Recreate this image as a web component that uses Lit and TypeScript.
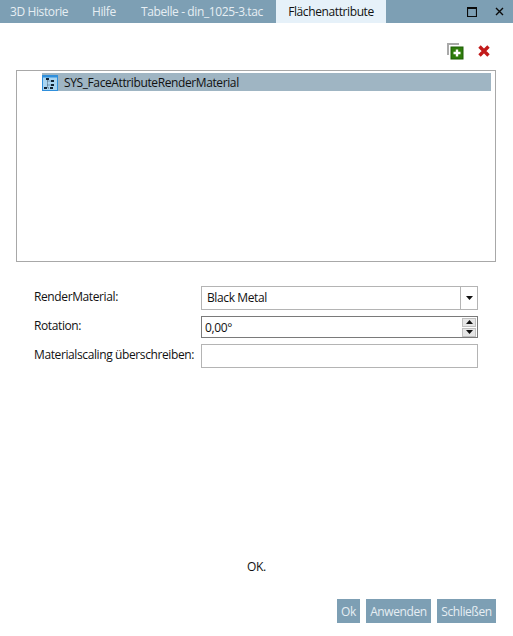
import { LitElement, html, css } from "lit";
import { customElement } from "lit/decorators.js";

@customElement("app-root")
export class AppRoot extends LitElement {
  static styles = css`
    :host { display: block; width: 513px; height: 636px; background: #fff; font-family: "Open Sans", "Noto Sans", sans-serif; font-size: 12px; letter-spacing: -0.39px; color: #111; overflow: hidden; }
    .root { display: flex; flex-direction: column; height: 636px; }
    .tabbar { display: flex; align-items: stretch; height: 23px; background: #7d9fb4; color: #e6eef3; flex: none; }
    .tab { display: flex; align-items: center; white-space: nowrap; }
    .t1 { margin-left: 10px; width: 82px; }
    .t2 { width: 49px; }
    .t3 { width: 135px; }
    .active { width: 110px; background: #e6f1f9; color: #111; justify-content: center; }
    .winbtns { margin-left: auto; display: flex; align-items: center; gap: 18px; padding-right: 9px; }
    .winbtns svg { display: block; }
    .toolbar { display: flex; justify-content: flex-end; gap: 13px; padding: 20px 22px 0 0; height: 27px; box-sizing: content-box; align-items: flex-start; flex: none; }
    .toolbar svg { display: block; }
    .list { margin: 0 17px 0 16px; height: 192px; box-sizing: border-box; border: 1px solid #a8a8a8; padding: 2px 4px 0 25px; flex: none; }
    .row { display: flex; align-items: center; gap: 6px; height: 18px; background: #9fb5c3; }
    .row svg { display: block; margin-top: 1px; }
    .form { display: grid; grid-template-columns: 167px 277px; padding: 24px 0 0 34px; row-gap: 6px; flex: none; align-items: center; }
    .form label { white-space: nowrap; margin-top: -4px; }
    .field { height: 24px; box-sizing: border-box; border: 1px solid #b4b4b4; display: flex; align-items: center; background: #fff; }
    .combo { padding-left: 5px; justify-content: space-between; }
    .combo span { margin-top: -2px; }
    .dd { width: 16px; height: 22px; border-left: 1px solid #b4b4b4; display: flex; align-items: center; justify-content: center; }
    .spin { border-color: #7a7a7a; height: 22px; padding-left: 3px; justify-content: space-between; }
    .spinbtns { display: flex; flex-direction: column; gap: 1px; margin-right: 1px; }
    .sb { width: 12px; height: 7px; background: #e6e6e6; border: 1px solid #c0c0c0; display: flex; align-items: center; justify-content: center; }
    .spacer { flex: 1; display: flex; flex-direction: column; align-items: flex-start; justify-content: flex-end; padding-left: 247px; padding-bottom: 24px; }
    .footer { display: flex; justify-content: flex-end; gap: 6px; padding: 0 17px 13px 0; flex: none; }
    .btn { height: 24px; background: #7d9fb4; color: #e6eef3; display: flex; align-items: center; justify-content: center; }
    .b1 { width: 23px; } .b2 { width: 65px; } .b3 { width: 59px; }
  `;

  render() {
    return html`<div class="root">
      <div class="tabbar">
        <div class="tab t1">3D Historie</div>
        <div class="tab t2">Hilfe</div>
        <div class="tab t3">Tabelle - din_1025-3.tac</div>
        <div class="tab active">Flächenattribute</div>
        <div class="winbtns">
          <svg width="10" height="10" viewBox="0 0 10 10"><path d="M.5.5h9v9h-9z M0 1.5h10" fill="none" stroke="#0a0a0a" stroke-width="1.2"/></svg>
          <svg width="9" height="9" viewBox="0 0 9 9"><path d="M1 1l7 7M8 1L1 8" stroke="#0a0a0a" stroke-width="1.4"/></svg>
        </div>
      </div>
      <div class="toolbar">
        <svg width="17" height="17" viewBox="0 0 17 17">
          <path d="M1 12V1h11" fill="none" stroke="#a9a9a9" stroke-width="2"/>
          <rect x="4" y="4" width="12" height="12" fill="#2f7d0c" stroke="#1f5f06"/>
          <path d="M10 6.500v7M6.500 10h7" stroke="#fff" stroke-width="2.4"/>
        </svg>
        <svg width="14" height="14" viewBox="0 0 14 14" style="margin-top:1px">
          <path d="M2.5 2.5l9 9M11.5 2.5l-9 9" stroke="#c21a1a" stroke-width="3.4"/>
        </svg>
      </div>
      <div class="list">
        <div class="row">
          <svg width="16" height="16" viewBox="0 0 16 16">
            <rect x=".5" y=".5" width="15" height="15" fill="#a9d4f0" stroke="#2f8fdc"/>
            <rect x="1" y="1" width="14" height="1.500" fill="#2f8fdc"/>
            <path d="M5.5 3.500v9.500h3M5.5 6h3M5.5 10h3" fill="none" stroke="#345" stroke-width=".8" stroke-dasharray="1 1"/>
            <path d="M4 3h3v2H4zM9 5h3v2H9zM9 9h3v2H9zM2 12h3v2H2zM8 12h3v2H8z" fill="#123"/>
          </svg>
          <span>SYS_FaceAttributeRenderMaterial</span>
        </div>
      </div>
      <div class="form">
        <label>RenderMaterial:</label>
        <div class="field combo"><span>Black Metal</span>
          <div class="dd"><svg width="7" height="4" viewBox="0 0 7 4"><path d="M0 0h7L3.500 4z" fill="#111"/></svg></div>
        </div>
        <label>Rotation:</label>
        <div class="field spin"><span>0,00°</span>
          <div class="spinbtns">
            <div class="sb"><svg width="7" height="4" viewBox="0 0 7 4"><path d="M0 4h7L3.500 0z" fill="#111"/></svg></div>
            <div class="sb"><svg width="7" height="4" viewBox="0 0 7 4"><path d="M0 0h7L3.500 4z" fill="#111"/></svg></div>
          </div>
        </div>
        <label>Materialscaling überschreiben:</label>
        <div class="field"></div>
      </div>
      <div class="spacer"><span>OK.</span></div>
      <div class="footer">
        <div class="btn b1">Ok</div>
        <div class="btn b2">Anwenden</div>
        <div class="btn b3">Schließen</div>
      </div>
    </div>`;
  }
}
